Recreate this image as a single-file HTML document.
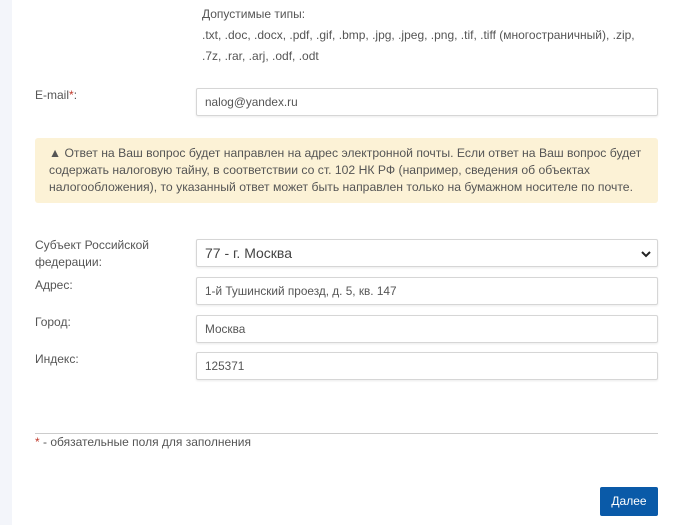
<!DOCTYPE html>
<html><head><meta charset="utf-8"><style>
*{box-sizing:border-box;margin:0;padding:0}
body{width:700px;height:525px;background:#fff;font-family:"Liberation Sans","Noto Sans CJK SC",sans-serif;color:#555;position:relative;overflow:hidden;font-size:12px}
.strip{position:absolute;left:0;top:0;width:12px;height:525px;background:#f3f5fa}
.a{position:absolute;white-space:nowrap}
.inp{position:absolute;left:196px;width:462px;height:28px;border:1px solid #d6d6d6;border-radius:2px;box-shadow:0 1px 2px rgba(0,0,0,.08);padding-left:8px;line-height:26px;font-size:11.8px;color:#555}
.alert{position:absolute;left:35px;top:138px;width:623px;height:65px;background:#fcf2d6;border-radius:3px;padding:7px 0 0 14px;font-size:12.2px;line-height:17px;color:#555;white-space:nowrap}
.btn{position:absolute;left:600px;top:487px;width:58px;height:29px;background:#0a5aa8;border-radius:2px;color:#fff;font-size:12px;text-align:center;line-height:29px}
</style></head><body>
<div class="strip"></div>
<div class="a" style="left:202px;top:4px;font-size:12px;line-height:21px">Допустимые типы:<br>.txt, .doc, .docx, .pdf, .gif, .bmp, .jpg, .jpeg, .png, .tif, .tiff (многостраничный), .zip,<br>.7z, .rar, .arj, .odf, .odt</div>
<div class="a" style="left:35px;top:88px">E-mail<span style="color:#c0392b">*</span>:</div>
<div class="inp" style="top:88px">nalog@yandex.ru</div>
<div class="alert">▲ Ответ на Ваш вопрос будет направлен на адрес электронной почты. Если ответ на Ваш вопрос будет<br>содержать налоговую тайну, в соответствии со ст. 102 НК РФ (например, сведения об объектах<br>налогообложения), то указанный ответ может быть направлен только на бумажном носителе по почте.</div>
<div class="a" style="left:35px;top:237px;line-height:17px">Субъект Российской<br>федерации:</div>
<div class="inp" style="top:239px;font-size:14px;color:#444">77 - г. Москва<svg style="position:absolute;right:6px;top:10px" width="10" height="8" viewBox="0 0 10 8"><path d="M1 2l4 4 4-4" stroke="#222" stroke-width="2" fill="none"/></svg></div>
<div class="a" style="left:35px;top:278px">Адрес:</div>
<div class="inp" style="top:277px">1-й Тушинский проезд, д. 5, кв. 147</div>
<div class="a" style="left:35px;top:315px">Город:</div>
<div class="inp" style="top:315px">Москва</div>
<div class="a" style="left:35px;top:352px">Индекс:</div>
<div class="inp" style="top:352px">125371</div>
<div style="position:absolute;left:35px;top:433px;width:623px;height:1px;background:#ccc"></div>
<div class="a" style="left:35px;top:435px"><span style="color:#c0392b">*</span> - обязательные поля для заполнения</div>
<div class="btn">Далее</div>
</body></html>
